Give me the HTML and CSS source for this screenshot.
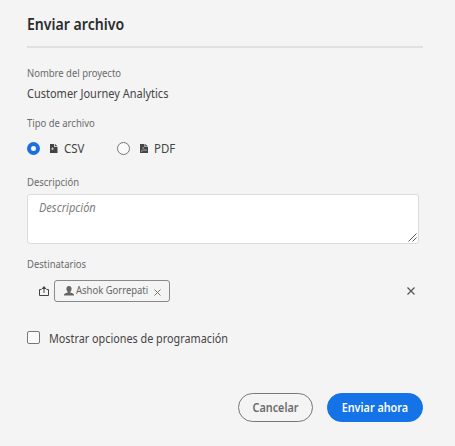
FILE: index.html
```html
<!DOCTYPE html>
<html lang="es">
<head>
<meta charset="utf-8">
<title>Enviar archivo</title>
<link rel="stylesheet" href="styles.css">
</head>
<body>
<form class="dialog">
  <h1 class="title"><span class="text">Enviar archivo</span></h1>
  <div class="label project-label"><span class="text">Nombre del proyecto</span></div>
  <div class="project"><span class="text">Customer Journey Analytics</span></div>
  <div class="label type-label"><span class="text">Tipo de archivo</span></div>
  <div class="types">
    <label class="type csv">
      <span class="radio selected"></span>
      <svg class="file" viewBox="0 0 8 9"><path fill="#444" d="M0 0h4.200v3H7.500v6H0zM5 0l2.500 2.300H5z"/><path fill="none" stroke="#ddd" stroke-width=".8" d="M1.200 4.800h2.600M2.500 3.500v2.600"/></svg>
      <span class="text">CSV</span>
    </label>
    <label class="type pdf">
      <span class="radio"></span>
      <svg class="file" viewBox="0 0 8 9"><path fill="#444" d="M0 0h4.500v3H8v6H0zM5.200 0 8 2.500H5.200z"/><path fill="none" stroke="#bbb" stroke-width=".5" d="M1 7.500C3 6 3.500 4.500 3 3c0 2 1.500 3.200 4 3.200-2 0-4 .2-6 1.300"/></svg>
      <span class="text">PDF</span>
    </label>
  </div>
  <div class="label description-label"><span class="text">Descripción</span></div>
  <div class="textarea">
    <span class="text">Descripción</span>
    <svg class="grip" viewBox="0 0 9 9"><path fill="none" stroke="#444" stroke-width=".9" d="M.5 8.500l8-8M4.500 8.500l4-4"/></svg>
  </div>
  <div class="label recipients-label"><span class="text">Destinatarios</span></div>
  <div class="recipients">
    <svg class="share" viewBox="0 0 10 10"><path fill="none" stroke="#444" d="M2.500 3.500h-2v6h9v-6h-2M5 7V1.500"/><path fill="#444" d="M5 0l2.500 3h-5z"/></svg>
    <div class="chip">
      <svg class="person" viewBox="0 0 10 10"><path fill="#666" d="M5 0c1.700 0 2.600 1.100 2.600 2.800 0 1.400-.6 2.400-1.300 3v.7C8.500 7 10 7.500 10 9v.5H0V9c0-1.500 1.500-2 3.700-2.500v-.7c-.7-.6-1.300-1.600-1.300-3C2.400 1.100 3.300 0 5 0z"/></svg>
      <span class="name text">Ashok Gorrepati</span>
      <svg class="remove" viewBox="0 0 7 7"><path fill="none" stroke="#777" d="M.5.5l6 6M6.500.5l-6 6"/></svg>
    </div>
    <svg class="clear" viewBox="0 0 8 8"><path fill="none" stroke="#555" stroke-width="1.200" d="M.5.5l7 7M7.500.5l-7 7"/></svg>
  </div>
  <label class="schedule"><span class="checkbox"></span><span class="text">Mostrar opciones de programación</span></label>
  <div class="actions">
    <button type="button" class="button cancel"><span class="text">Cancelar</span></button>
    <button type="button" class="button send"><span class="text">Enviar ahora</span></button>
  </div>
</form>
</body>
</html>
```
FILE: styles.css
```css
* { box-sizing: border-box; }
body {
  margin: 0;
  background: #f4f4f4;
  color: #444;
  font: 13px/18px "Noto Sans", "Open Sans", sans-serif;
}
svg { display: block; flex: none; overflow: visible; }

/* Slightly condensed lettering */
.text {
  display: inline-block;
  flex: none;
  white-space: nowrap;
  transform: scaleX(.86);
  transform-origin: left center;
}
.title .text { transform: scaleX(.91); }
.project .text { transform: scaleX(.845); }
.types .text { transform: scaleX(.88); }
.schedule .text { transform: scaleX(.832); }
.textarea .text { transform: scaleX(.92); }

.dialog { width: 396px; margin-left: 27px; padding-top: 13px; }
.title {
  height: 35px;
  margin: 0;
  border-bottom: 2px solid #e0e0e0;
  color: #2c2c2c;
  font-size: 15.5px;
  font-weight: 600;
  line-height: 22px;
}
.label { height: 16px; color: #6b6b6b; font-size: 11px; line-height: 16px; }
.project-label { margin-top: 17px; }
.project { height: 18px; margin-top: 3px; }
.type-label { margin-top: 13px; }
.types { display: flex; height: 18px; margin-top: 8px; }
.type { display: flex; align-items: center; width: 90px; }
.radio { flex: none; width: 13px; height: 13px; border: 1px solid #777; border-radius: 50%; background: #fafafa; }
.radio.selected { border: 4px solid #1b6fe0; }
.file { width: 8px; height: 9px; margin: 0 6px 0 10px; }
.description-label { margin-top: 17px; }
.textarea {
  display: flex;
  justify-content: space-between;
  width: 392px;
  height: 50px;
  margin-top: 4px;
  padding: 4px 1px 1px 11px;
  border: 1px solid #dcdcdc;
  border-radius: 3px;
  background: #fff;
  color: #7d7d7d;
  font-size: 12px;
  font-style: italic;
}
.grip { align-self: flex-end; width: 9px; height: 9px; }
.recipients-label { margin-top: 12px; }
.recipients { display: flex; align-items: center; height: 22px; margin-top: 8px; padding: 0 8px 0 12px; }
.share { width: 10px; height: 10px; }
.chip {
  display: flex;
  align-items: center;
  width: 116px;
  height: 22px;
  margin-left: 5px;
  padding: 0 8px 0 9px;
  border: 1px solid #888;
  border-radius: 3px;
  color: #666;
  font-size: 11px;
}
.person { width: 10px; height: 10px; margin-right: 2px; }
.name { width: 72px; margin-top: -2px; }
.remove { width: 7px; height: 7px; margin: 2px 0 0 auto; }
.clear { width: 8px; height: 8px; margin-left: auto; }
.schedule { display: flex; align-items: center; height: 18px; margin-top: 27px; }
.checkbox { flex: none; width: 13px; height: 13px; margin: -2px 9px 0 0; border: 1px solid #777; border-radius: 2px; background: #fafafa; }
.actions { display: flex; justify-content: flex-end; gap: 14px; margin-top: 46px; }
.button {
  height: 29px;
  padding: 0;
  border: 1px solid #777;
  border-radius: 15px;
  background: transparent;
  color: #6b6b6b;
  font: 600 12px/26px "Noto Sans", "Open Sans", sans-serif;
}
.button .text { transform: scaleX(.9); transform-origin: center; }
.cancel { width: 75px; }
.send { width: 96px; border-color: #1473e6; background: #1473e6; color: #fff; }
```
